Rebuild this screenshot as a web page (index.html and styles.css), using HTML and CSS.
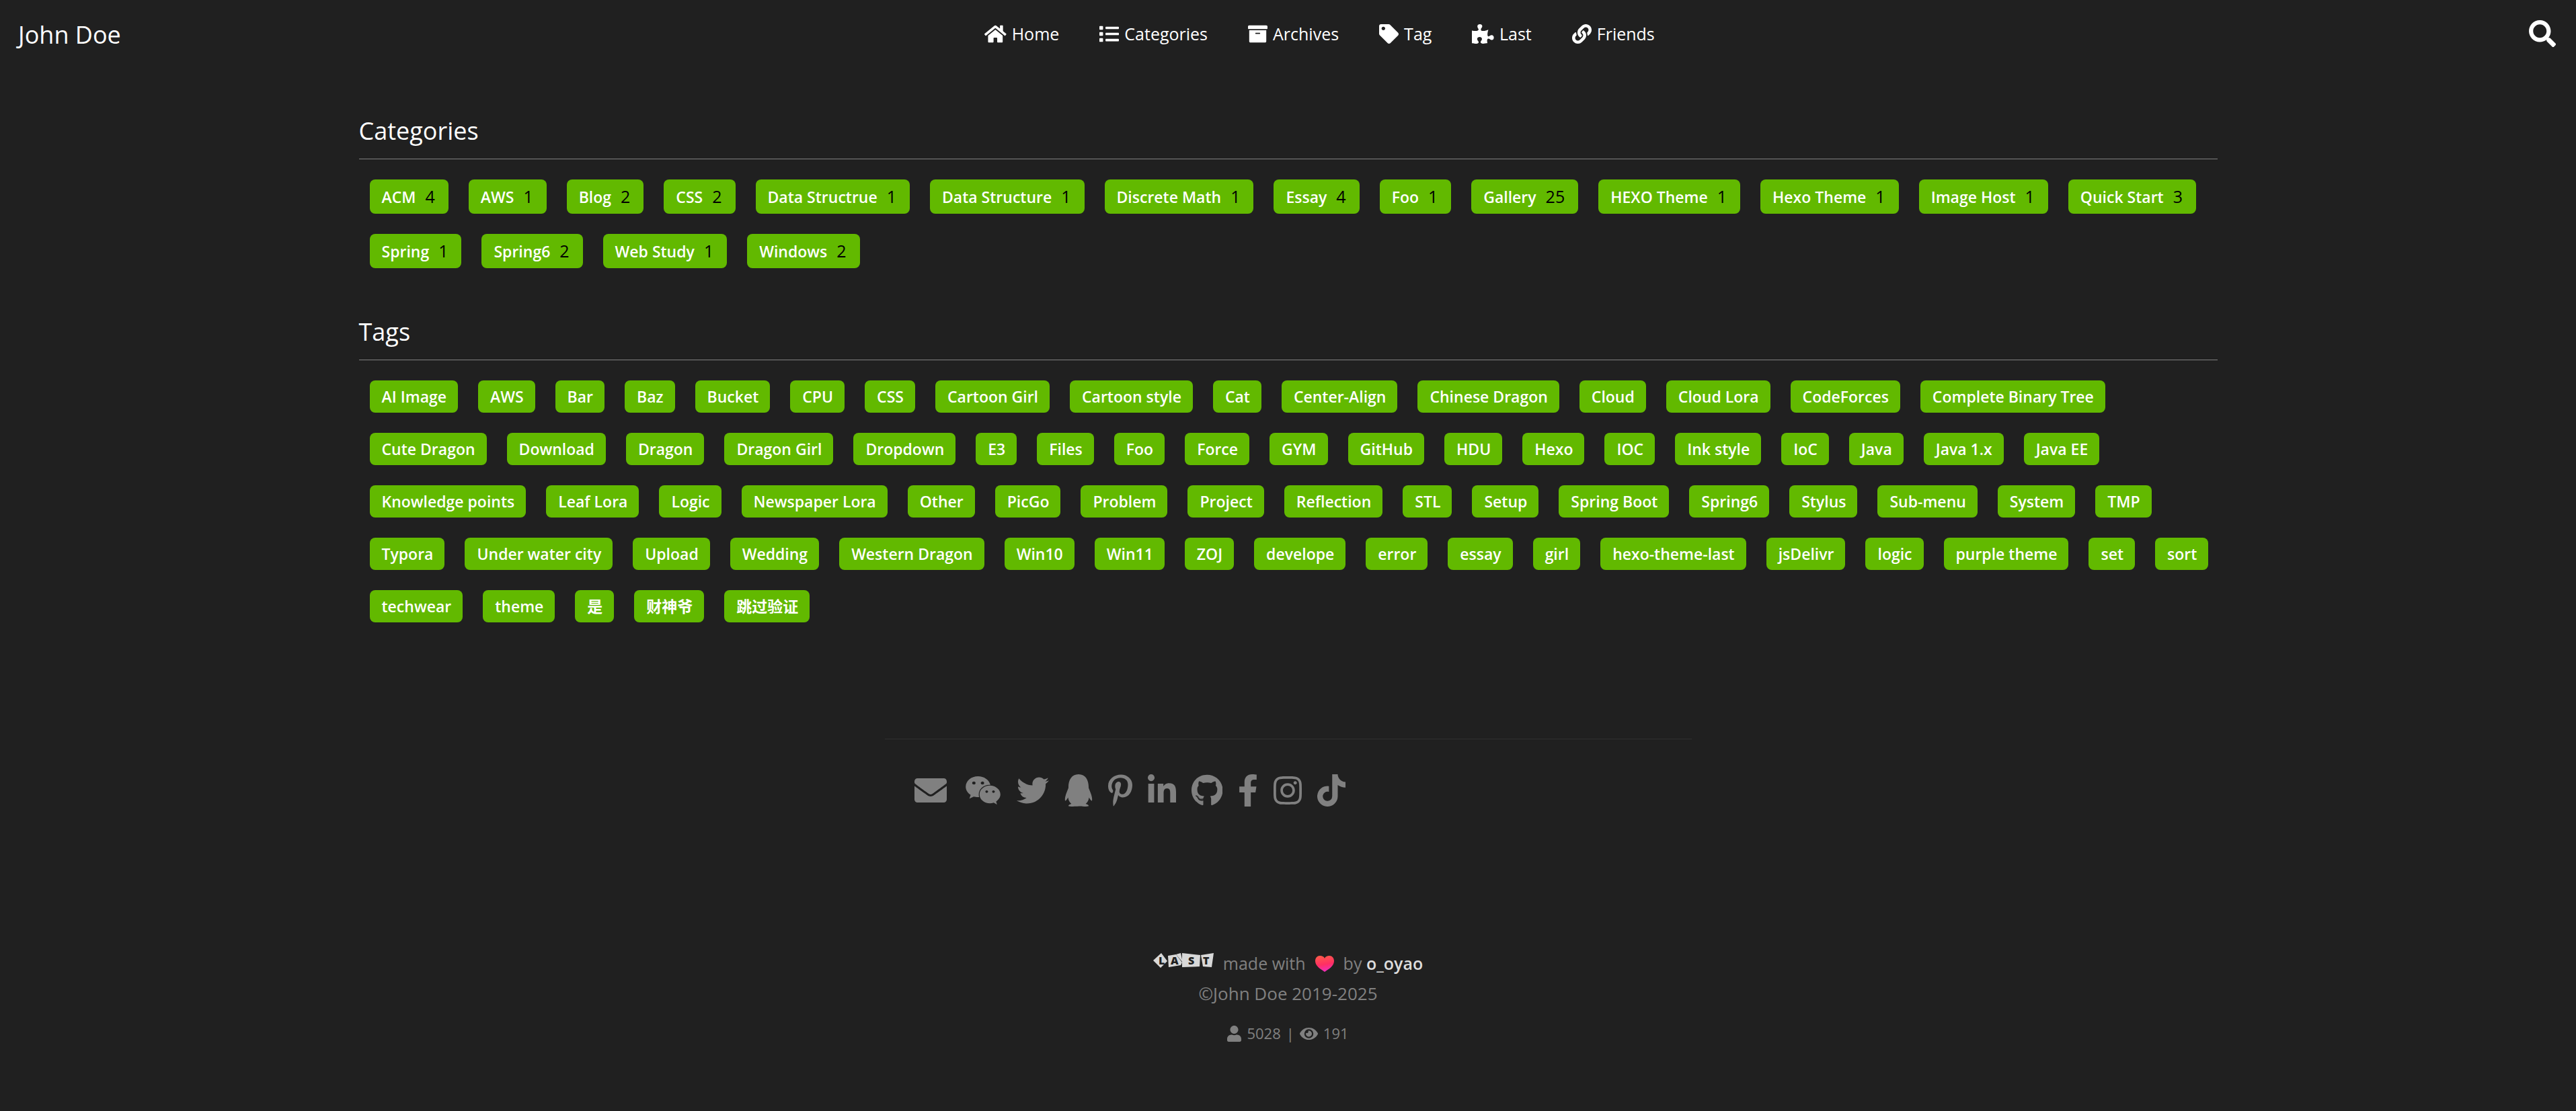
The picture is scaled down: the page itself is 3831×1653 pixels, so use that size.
FILE: index.html
```html
<!DOCTYPE html>
<html lang="en">
<head>
<meta charset="utf-8">
<meta name="viewport" content="width=device-width, initial-scale=1">
<title>Categories &amp; Tags - John Doe</title>
<link rel="stylesheet" href="styles.css">
</head>
<body>
<header class="topbar">
  <a class="brand" href="#">John Doe</a>
  <nav class="menu" aria-label="Main">
    <a class="menu-item" href="#"><svg class="icon" viewBox="0 0 576 512" aria-hidden="true"><path d="M280.37 148.26L96 300.11V464a16 16 0 0 0 16 16l112.06-.29a16 16 0 0 0 15.92-16V368a16 16 0 0 1 16-16h64a16 16 0 0 1 16 16v95.64a16 16 0 0 0 16 16.05L464 480a16 16 0 0 0 16-16V300L295.67 148.26a12.19 12.19 0 0 0-15.3 0zM571.6 251.47L488 182.56V44.05a12 12 0 0 0-12-12h-56a12 12 0 0 0-12 12v72.61L318.47 43a48 48 0 0 0-61 0L4.34 251.47a12 12 0 0 0-1.6 16.9l25.5 31A12 12 0 0 0 45.15 301l235.22-193.74a12.19 12.19 0 0 1 15.3 0L530.9 301a12 12 0 0 0 16.9-1.6l25.5-31a12 12 0 0 0-1.7-16.93z"/></svg>Home</a>
    <a class="menu-item" href="#"><svg class="icon" viewBox="0 0 512 512" aria-hidden="true"><path d="M80 368H16a16 16 0 0 0-16 16v64a16 16 0 0 0 16 16h64a16 16 0 0 0 16-16v-64a16 16 0 0 0-16-16zm0-320H16A16 16 0 0 0 0 64v64a16 16 0 0 0 16 16h64a16 16 0 0 0 16-16V64a16 16 0 0 0-16-16zm0 160H16a16 16 0 0 0-16 16v64a16 16 0 0 0 16 16h64a16 16 0 0 0 16-16v-64a16 16 0 0 0-16-16zm416 176H176a16 16 0 0 0-16 16v32a16 16 0 0 0 16 16h320a16 16 0 0 0 16-16v-32a16 16 0 0 0-16-16zm0-320H176a16 16 0 0 0-16 16v32a16 16 0 0 0 16 16h320a16 16 0 0 0 16-16V80a16 16 0 0 0-16-16zm0 160H176a16 16 0 0 0-16 16v32a16 16 0 0 0 16 16h320a16 16 0 0 0 16-16v-32a16 16 0 0 0-16-16z"/></svg>Categories</a>
    <a class="menu-item" href="#"><svg class="icon" viewBox="0 0 512 512" aria-hidden="true"><path d="M32 448c0 17.7 14.3 32 32 32h384c17.7 0 32-14.3 32-32V160H32v288zm160-212c0-6.600 5.400-12 12-12h104c6.600 0 12 5.400 12 12v8c0 6.600-5.400 12-12 12H204c-6.600 0-12-5.400-12-12v-8zM480 32H32C14.300 32 0 46.300 0 64v48c0 8.800 7.200 16 16 16h480c8.800 0 16-7.200 16-16V64c0-17.700-14.300-32-32-32z"/></svg>Archives</a>
    <a class="menu-item" href="#"><svg class="icon" viewBox="0 0 512 512" aria-hidden="true"><path d="M0 252.118V48C0 21.490 21.490 0 48 0h204.118a48 48 0 0 1 33.941 14.059l211.882 211.882c18.745 18.745 18.745 49.137 0 67.882L293.823 497.941c-18.745 18.745-49.137 18.745-67.882 0L14.059 286.059A48 48 0 0 1 0 252.118zM112 64c-26.510 0-48 21.490-48 48s21.490 48 48 48 48-21.490 48-48-21.490-48-48-48z"/></svg>Tag</a>
    <a class="menu-item" href="#"><svg class="icon" viewBox="0 0 576 512" aria-hidden="true"><path d="M519.442 288.651c-41.519 0-59.5 31.593-82.058 31.593C377.409 320.244 432 144 432 144s-196.288 80-196.288-3.297c0-35.827 36.288-46.25 36.288-85.985C272 19.216 243.885 0 210.539 0c-34.654 0-66.366 18.891-66.366 56.346 0 41.364 31.711 59.277 31.711 81.75C175.885 207.719 0 166.758 0 166.758v333.237s178.635 41.047 178.635-28.662c0-22.473-40-40.107-40-81.471 0-37.456 29.25-56.346 63.577-56.346 33.673 0 61.788 19.216 61.788 54.717 0 39.735-36.288 50.158-36.288 85.985 0 60.803 129.675 25.730 181.230 25.730 0 0-34.725-120.101 25.827-120.101 35.962 0 46.423 36.152 86.308 36.152C556.712 416 576 387.990 576 354.443c0-34.199-18.962-65.792-56.558-65.792z"/></svg>Last</a>
    <a class="menu-item" href="#"><svg class="icon" viewBox="0 0 512 512" aria-hidden="true"><path d="M326.612 185.391c59.747 59.809 58.927 155.698.36 214.590-.110.120-.240.250-.360.370l-67.200 67.200c-59.270 59.270-155.699 59.262-214.960 0-59.270-59.260-59.270-155.700 0-214.960l37.106-37.106c9.840-9.840 26.786-3.300 27.294 10.606.648 17.722 3.826 35.527 9.690 52.721 1.986 5.822.567 12.262-3.783 16.612l-13.087 13.087c-28.026 28.026-28.905 73.660-1.155 101.960 28.024 28.579 74.086 28.749 102.325.510l67.200-67.190c28.191-28.191 28.073-73.757 0-101.830-3.701-3.694-7.429-6.564-10.341-8.569a16.037 16.037 0 0 1-6.947-12.606c-.396-10.567 3.348-21.456 11.698-29.806l21.054-21.055c5.521-5.521 14.182-6.199 20.584-1.731a152.482 152.482 0 0 1 20.522 17.197zM467.547 44.449c-59.261-59.262-155.690-59.270-214.960 0l-67.200 67.200c-.120.120-.250.250-.360.370-58.566 58.892-59.387 154.781.360 214.590a152.454 152.454 0 0 0 20.521 17.196c6.402 4.468 15.064 3.789 20.584-1.731l21.054-21.055c8.350-8.350 12.094-19.239 11.698-29.806a16.037 16.037 0 0 0-6.947-12.606c-2.912-2.005-6.640-4.875-10.341-8.569-28.073-28.073-28.191-73.639 0-101.830l67.200-67.190c28.239-28.239 74.300-28.069 102.325.510 27.750 28.300 26.872 73.934-1.155 101.960l-13.087 13.087c-4.350 4.350-5.769 10.790-3.783 16.612 5.864 17.194 9.042 34.999 9.690 52.721.509 13.906 17.454 20.446 27.294 10.606l37.106-37.106c59.271-59.259 59.271-155.699.001-214.959z"/></svg>Friends</a>
  </nav>
  <button class="search" type="button" aria-label="Search"><svg class="search-icon" viewBox="0 0 512 512" aria-hidden="true"><path d="M505 442.700L405.300 343c-4.500-4.500-10.600-7-17-7H372c27.600-35.300 44-79.700 44-128C416 93.100 322.900 0 208 0S0 93.100 0 208s93.100 208 208 208c48.300 0 92.700-16.400 128-44v16.300c0 6.400 2.500 12.500 7 17l99.700 99.700c9.400 9.400 24.600 9.400 33.900 0l28.300-28.300c9.400-9.400 9.400-24.600.1-34zM208 336c-70.700 0-128-57.200-128-128 0-70.700 57.200-128 128-128 70.700 0 128 57.200 128 128 0 70.700-57.200 128-128 128z"/></svg></button>
</header>

<main class="content">
  <section class="group">
    <h2 class="group-title">Categories</h2>
    <ul class="chips">
      <li><a class="chip chip-counted" href="#">ACM<span class="count">4</span></a></li>
      <li><a class="chip chip-counted" href="#">AWS<span class="count">1</span></a></li>
      <li><a class="chip chip-counted" href="#">Blog<span class="count">2</span></a></li>
      <li><a class="chip chip-counted" href="#">CSS<span class="count">2</span></a></li>
      <li><a class="chip chip-counted" href="#">Data Structrue<span class="count">1</span></a></li>
      <li><a class="chip chip-counted" href="#">Data Structure<span class="count">1</span></a></li>
      <li><a class="chip chip-counted" href="#">Discrete Math<span class="count">1</span></a></li>
      <li><a class="chip chip-counted" href="#">Essay<span class="count">4</span></a></li>
      <li><a class="chip chip-counted" href="#">Foo<span class="count">1</span></a></li>
      <li><a class="chip chip-counted" href="#">Gallery<span class="count">25</span></a></li>
      <li><a class="chip chip-counted" href="#">HEXO Theme<span class="count">1</span></a></li>
      <li><a class="chip chip-counted" href="#">Hexo Theme<span class="count">1</span></a></li>
      <li><a class="chip chip-counted" href="#">Image Host<span class="count">1</span></a></li>
      <li><a class="chip chip-counted" href="#">Quick Start<span class="count">3</span></a></li>
      <li><a class="chip chip-counted" href="#">Spring<span class="count">1</span></a></li>
      <li><a class="chip chip-counted" href="#">Spring6<span class="count">2</span></a></li>
      <li><a class="chip chip-counted" href="#">Web Study<span class="count">1</span></a></li>
      <li><a class="chip chip-counted" href="#">Windows<span class="count">2</span></a></li>
    </ul>
  </section>

  <section class="group">
    <h2 class="group-title">Tags</h2>
    <ul class="chips">
      <li><a class="chip" href="#">AI Image</a></li>
      <li><a class="chip" href="#">AWS</a></li>
      <li><a class="chip" href="#">Bar</a></li>
      <li><a class="chip" href="#">Baz</a></li>
      <li><a class="chip" href="#">Bucket</a></li>
      <li><a class="chip" href="#">CPU</a></li>
      <li><a class="chip" href="#">CSS</a></li>
      <li><a class="chip" href="#">Cartoon Girl</a></li>
      <li><a class="chip" href="#">Cartoon style</a></li>
      <li><a class="chip" href="#">Cat</a></li>
      <li><a class="chip" href="#">Center-Align</a></li>
      <li><a class="chip" href="#">Chinese Dragon</a></li>
      <li><a class="chip" href="#">Cloud</a></li>
      <li><a class="chip" href="#">Cloud Lora</a></li>
      <li><a class="chip" href="#">CodeForces</a></li>
      <li><a class="chip" href="#">Complete Binary Tree</a></li>
      <li><a class="chip" href="#">Cute Dragon</a></li>
      <li><a class="chip" href="#">Download</a></li>
      <li><a class="chip" href="#">Dragon</a></li>
      <li><a class="chip" href="#">Dragon Girl</a></li>
      <li><a class="chip" href="#">Dropdown</a></li>
      <li><a class="chip" href="#">E3</a></li>
      <li><a class="chip" href="#">Files</a></li>
      <li><a class="chip" href="#">Foo</a></li>
      <li><a class="chip" href="#">Force</a></li>
      <li><a class="chip" href="#">GYM</a></li>
      <li><a class="chip" href="#">GitHub</a></li>
      <li><a class="chip" href="#">HDU</a></li>
      <li><a class="chip" href="#">Hexo</a></li>
      <li><a class="chip" href="#">IOC</a></li>
      <li><a class="chip" href="#">Ink style</a></li>
      <li><a class="chip" href="#">IoC</a></li>
      <li><a class="chip" href="#">Java</a></li>
      <li><a class="chip" href="#">Java 1.x</a></li>
      <li><a class="chip" href="#">Java EE</a></li>
      <li><a class="chip" href="#">Knowledge points</a></li>
      <li><a class="chip" href="#">Leaf Lora</a></li>
      <li><a class="chip" href="#">Logic</a></li>
      <li><a class="chip" href="#">Newspaper Lora</a></li>
      <li><a class="chip" href="#">Other</a></li>
      <li><a class="chip" href="#">PicGo</a></li>
      <li><a class="chip" href="#">Problem</a></li>
      <li><a class="chip" href="#">Project</a></li>
      <li><a class="chip" href="#">Reflection</a></li>
      <li><a class="chip" href="#">STL</a></li>
      <li><a class="chip" href="#">Setup</a></li>
      <li><a class="chip" href="#">Spring Boot</a></li>
      <li><a class="chip" href="#">Spring6</a></li>
      <li><a class="chip" href="#">Stylus</a></li>
      <li><a class="chip" href="#">Sub-menu</a></li>
      <li><a class="chip" href="#">System</a></li>
      <li><a class="chip" href="#">TMP</a></li>
      <li><a class="chip" href="#">Typora</a></li>
      <li><a class="chip" href="#">Under water city</a></li>
      <li><a class="chip" href="#">Upload</a></li>
      <li><a class="chip" href="#">Wedding</a></li>
      <li><a class="chip" href="#">Western Dragon</a></li>
      <li><a class="chip" href="#">Win10</a></li>
      <li><a class="chip" href="#">Win11</a></li>
      <li><a class="chip" href="#">ZOJ</a></li>
      <li><a class="chip" href="#">develope</a></li>
      <li><a class="chip" href="#">error</a></li>
      <li><a class="chip" href="#">essay</a></li>
      <li><a class="chip" href="#">girl</a></li>
      <li><a class="chip" href="#">hexo-theme-last</a></li>
      <li><a class="chip" href="#">jsDelivr</a></li>
      <li><a class="chip" href="#">logic</a></li>
      <li><a class="chip" href="#">purple theme</a></li>
      <li><a class="chip" href="#">set</a></li>
      <li><a class="chip" href="#">sort</a></li>
      <li><a class="chip" href="#">techwear</a></li>
      <li><a class="chip" href="#">theme</a></li>
      <li><a class="chip" href="#" lang="zh">是</a></li>
      <li><a class="chip" href="#" lang="zh">财神爷</a></li>
      <li><a class="chip" href="#" lang="zh">跳过验证</a></li>
    </ul>
  </section>
</main>

<footer class="footer">
  <div class="social">
    <a class="social-link social-mail" href="#" aria-label="Email"><svg class="social-icon" viewBox="0 0 512 512"><path d="M502.300 190.800c3.900-3.100 9.700-.2 9.700 4.700V400c0 26.500-21.500 48-48 48H48c-26.500 0-48-21.500-48-48V195.600c0-5 5.700-7.800 9.700-4.700 22.400 17.400 52.100 39.500 154.100 113.600 21.100 15.400 56.700 47.800 92.200 47.600 35.700.3 72-32.800 92.300-47.600 102-74.100 131.600-96.300 154-113.700zM256 320c23.200.4 56.600-29.200 73.400-41.400 132.700-96.300 142.800-104.700 173.400-128.700 5.800-4.500 9.200-11.500 9.200-18.900v-19c0-26.500-21.500-48-48-48H48c-26.500 0-48 21.500-48 48v19c0 7.400 3.400 14.300 9.200 18.900 30.600 23.900 40.700 32.400 173.400 128.700 16.800 12.200 50.200 41.800 73.400 41.400z"/></svg></a>
    <a class="social-link" href="#" aria-label="WeChat"><svg class="social-icon" viewBox="0 0 576 512"><path d="M385.200 167.600c6.400 0 12.600.3 18.800 1.100C387.400 90.300 303.300 32 207.700 32 100.500 32 13 104.800 13 197.400c0 53.400 29.300 97.500 77.900 131.600l-19.300 58.600 68-34.100c24.400 4.800 43.800 9.700 68.200 9.700 6.200 0 12.100-.3 18.300-.8-4-12.900-6.200-26.600-6.200-40.800-.1-84.900 72.900-154 165.300-154zm-104.500-52.900c14.500 0 24.200 9.700 24.200 24.400 0 14.500-9.700 24.200-24.200 24.200-14.800 0-29.300-9.700-29.300-24.200.1-14.700 14.600-24.400 29.300-24.400zm-136.400 48.600c-14.500 0-29.300-9.700-29.300-24.200 0-14.800 14.800-24.400 29.300-24.400 14.800 0 24.400 9.700 24.400 24.400 0 14.600-9.600 24.200-24.400 24.200zM563 319.400c0-77.900-77.900-141.300-165.400-141.300-92.700 0-165.400 63.400-165.400 141.300S305 460.700 397.600 460.700c19.300 0 38.900-5.100 58.600-9.900l53.400 29.300-14.800-48.600C534 402.100 563 363.200 563 319.400zm-219.100-24.500c-9.700 0-19.300-9.700-19.300-19.600 0-9.700 9.700-19.300 19.300-19.300 14.800 0 24.400 9.700 24.400 19.300 0 10-9.700 19.600-24.400 19.600zm107.100 0c-9.700 0-19.300-9.700-19.300-19.600 0-9.700 9.700-19.300 19.300-19.300 14.500 0 24.400 9.700 24.400 19.300.1 10-9.900 19.600-24.400 19.600z"/></svg></a>
    <a class="social-link" href="#" aria-label="Twitter"><svg class="social-icon" viewBox="0 0 512 512"><path d="M459.370 151.716c.325 4.548.325 9.097.325 13.645 0 138.720-105.583 298.558-298.558 298.558-59.452 0-114.680-17.219-161.137-47.106 8.447.974 16.568 1.299 25.340 1.299 49.055 0 94.213-16.568 130.274-44.832-46.132-.975-84.792-31.188-98.112-72.772 6.498.974 12.995 1.624 19.818 1.624 9.421 0 18.843-1.300 27.614-3.573-48.081-9.747-84.143-51.980-84.143-102.985v-1.299c13.969 7.797 30.214 12.670 47.431 13.319-28.264-18.843-46.781-51.005-46.781-87.391 0-19.492 5.197-37.360 14.294-52.954 51.655 63.675 129.300 105.258 216.365 109.807-1.624-7.797-2.599-15.918-2.599-24.040 0-57.828 46.782-104.934 104.934-104.934 30.213 0 57.502 12.670 76.670 33.137 23.715-4.548 46.456-13.320 66.599-25.340-7.798 24.366-24.366 44.833-46.132 57.827 21.117-2.273 41.584-8.122 60.426-16.243-14.292 20.791-32.161 39.308-52.628 54.253z"/></svg></a>
    <a class="social-link" href="#" aria-label="QQ"><svg class="social-icon" viewBox="0 0 448 512"><path d="M433.754 420.445c-11.526 1.393-44.860-52.741-44.860-52.741 0 31.345-16.136 72.247-51.051 101.786 16.842 5.192 54.843 19.167 45.803 34.421-7.316 12.343-125.510 7.881-159.632 4.037-34.122 3.844-152.316 8.306-159.632-4.037-9.045-15.250 28.918-29.214 45.783-34.415-34.920-29.539-51.059-70.445-51.059-101.792 0 0-33.334 54.134-44.859 52.741-5.370-.650-12.424-29.644 9.347-99.704 10.261-33.024 21.995-60.478 40.144-105.779C60.683 98.063 108.982.006 224 0c113.737.006 163.156 96.133 160.264 214.963 18.118 45.223 29.912 72.850 40.144 105.778 21.768 70.060 14.716 99.053 9.346 99.704z"/></svg></a>
    <a class="social-link" href="#" aria-label="Pinterest"><svg class="social-icon" viewBox="0 0 384 512"><path d="M204 6.500C101.400 6.500 0 74.900 0 185.600 0 256 39.600 296 63.600 296c9.900 0 15.600-27.600 15.600-35.400 0-9.300-23.700-29.100-23.700-67.800 0-80.400 61.200-137.400 140.400-137.400 68.100 0 118.500 38.700 118.500 109.800 0 53.100-21.300 152.700-90.300 152.700-24.900 0-46.200-18-46.200-43.800 0-37.800 26.400-74.400 26.400-113.400 0-66.200-93.900-54.200-93.900 25.800 0 16.800 2.100 35.400 9.600 50.700-13.800 59.400-42 147.900-42 209.100 0 18.900 2.700 37.500 4.500 56.400 3.400 3.800 1.700 3.400 6.900 1.500 50.400-69 48.600-82.500 71.400-172.800 12.300 23.400 44.100 36 69.300 36 106.200 0 153.900-103.500 153.900-196.800C384 71.300 298.200 6.500 204 6.500z"/></svg></a>
    <a class="social-link" href="#" aria-label="LinkedIn"><svg class="social-icon" viewBox="0 0 448 512"><path d="M100.280 448H7.400V148.900h92.880zM53.790 108.100C24.090 108.100 0 83.500 0 53.800a53.790 53.790 0 0 1 107.580 0c0 29.700-24.100 54.300-53.790 54.300zM447.900 448h-92.680V302.400c0-34.700-.7-79.200-48.290-79.200-48.290 0-55.690 37.700-55.690 76.700V448h-92.780V148.900h89.080v40.800h1.300c12.400-23.500 42.690-48.300 87.880-48.300 94 0 111.280 61.900 111.280 142.300V448z"/></svg></a>
    <a class="social-link" href="#" aria-label="GitHub"><svg class="social-icon" viewBox="0 0 496 512"><path d="M165.900 397.400c0 2-2.300 3.600-5.200 3.600-3.300.3-5.600-1.300-5.600-3.600 0-2 2.300-3.600 5.200-3.600 3-.3 5.600 1.300 5.600 3.600zm-31.100-4.500c-.7 2 1.300 4.300 4.300 4.900 2.600 1 5.600 0 6.200-2s-1.300-4.300-4.300-5.200c-2.600-.7-5.500.3-6.200 2.300zm44.200-1.700c-2.900.7-4.900 2.600-4.600 4.900.3 2 2.900 3.300 5.900 2.600 2.900-.7 4.900-2.600 4.600-4.600-.3-1.900-3-3.200-5.900-2.900zM244.800 8C106.100 8 0 113.300 0 252c0 110.900 69.800 205.800 169.500 239.200 12.800 2.300 17.300-5.600 17.300-12.100 0-6.200-.3-40.400-.3-61.400 0 0-70 15-84.700-29.800 0 0-11.400-29.100-27.800-36.600 0 0-22.900-15.700 1.600-15.400 0 0 24.900 2 38.600 25.800 21.900 38.600 58.600 27.500 72.900 20.900 2.300-16 8.800-27.100 16-33.700-55.900-6.200-112.300-14.300-112.300-110.500 0-27.500 7.600-41.300 23.600-58.900-2.600-6.500-11.100-33.300 2.600-67.900 20.900-6.500 69 27 69 27 20-5.600 41.500-8.500 62.800-8.500s42.800 2.900 62.800 8.500c0 0 48.100-33.600 69-27 13.700 34.700 5.200 61.400 2.600 67.900 16 17.700 25.800 31.500 25.800 58.900 0 96.500-58.900 104.200-114.800 110.500 9.200 7.900 17 22.900 17 46.400 0 33.700-.3 75.400-.3 83.600 0 6.500 4.600 14.400 17.300 12.100C428.200 457.800 496 362.900 496 252 496 113.300 383.500 8 244.800 8zM97.200 352.900c-1.300 1-1 3.300.7 5.200 1.600 1.600 3.900 2.300 5.200 1 1.300-1 1-3.300-.7-5.200-1.600-1.600-3.900-2.300-5.200-1zm-10.800-8.100c-.7 1.300.3 2.900 2.300 3.900 1.600 1 3.600.7 4.300-.7.7-1.300-.3-2.900-2.300-3.900-2-.6-3.600-.3-4.300.7zm32.400 35.600c-1.600 1.300-1 4.300 1.300 6.200 2.300 2.300 5.200 2.600 6.500 1 1.300-1.300.7-4.300-1.300-6.200-2.200-2.300-5.200-2.600-6.500-1zm-11.400-14.700c-1.600 1-1.600 3.600 0 5.900 1.600 2.300 4.300 3.300 5.600 2.300 1.600-1.300 1.600-3.900 0-6.200-1.400-2.300-4-3.300-5.600-2z"/></svg></a>
    <a class="social-link" href="#" aria-label="Facebook"><svg class="social-icon" viewBox="0 0 320 512"><path d="M279.140 288l14.220-92.660h-88.910v-60.130c0-25.350 12.420-50.060 52.240-50.060h40.420V6.260S260.430 0 225.360 0c-73.220 0-121.080 44.380-121.080 124.720v70.620H22.890V288h81.390v224h100.170V288z"/></svg></a>
    <a class="social-link" href="#" aria-label="Instagram"><svg class="social-icon" viewBox="0 0 448 512"><path d="M224.100 141c-63.600 0-114.900 51.300-114.900 114.900s51.300 114.900 114.900 114.900S339 319.500 339 255.900 287.700 141 224.100 141zm0 189.600c-41.100 0-74.700-33.500-74.700-74.700s33.500-74.700 74.700-74.700 74.700 33.500 74.700 74.700-33.600 74.700-74.700 74.700zm146.400-194.300c0 14.900-12 26.800-26.800 26.800-14.900 0-26.800-12-26.800-26.800s12-26.800 26.800-26.800 26.800 12 26.800 26.800zm76.100 27.200c-1.700-35.900-9.900-67.700-36.200-93.900-26.200-26.200-58-34.400-93.900-36.200-37-2.100-147.900-2.100-184.900 0-35.800 1.700-67.600 9.900-93.900 36.100s-34.400 58-36.200 93.900c-2.100 37-2.100 147.900 0 184.900 1.700 35.900 9.900 67.700 36.200 93.900s58 34.400 93.900 36.200c37 2.100 147.900 2.100 184.900 0 35.900-1.700 67.700-9.900 93.900-36.200 26.200-26.200 34.400-58 36.200-93.900 2.100-37 2.100-147.800 0-184.800zM398.800 388c-7.800 19.600-22.900 34.700-42.600 42.600-29.500 11.700-99.500 9-132.100 9s-102.700 2.600-132.100-9c-19.600-7.800-34.700-22.900-42.600-42.600-11.700-29.500-9-99.500-9-132.100s-2.600-102.700 9-132.100c7.800-19.600 22.900-34.700 42.600-42.600 29.500-11.700 99.500-9 132.100-9s102.700-2.600 132.100 9c19.600 7.800 34.700 22.900 42.600 42.600 11.700 29.500 9 99.500 9 132.100s2.700 102.700-9 132.100z"/></svg></a>
    <a class="social-link" href="#" aria-label="TikTok"><svg class="social-icon" viewBox="0 0 448 512"><path d="M448 209.910a210.060 210.060 0 0 1-122.770-39.250V349.380A162.550 162.550 0 1 1 185 188.310V278.200a74.620 74.620 0 1 0 52.230 71.180V0h88a121.180 121.180 0 0 0 1.860 22.170A122.180 122.180 0 0 0 381 102.390a121.430 121.430 0 0 0 67 20.140z"/></svg></a>
  </div>

  <div class="credits">
    <p class="credit-line">
      <a class="theme-link" href="#" aria-label="LAST theme"><svg class="theme-logo" viewBox="0 0 90 22" aria-hidden="true">
        <g class="logo-tile">
          <path d="M0 11L12 0 21 12 11 22z"/>
          <path d="M22 4L34 2 43 14 41 18 23 21z"/>
          <path d="M34 2L41 0 44 14z"/>
          <path d="M43 0L70 3 69 20 43 21z"/>
          <path d="M71 3L90 0 87 21 74 20z"/>
        </g>
        <g class="logo-letter">
          <text x="8" y="17">L</text>
          <text x="26" y="17">A</text>
          <text x="52" y="17">S</text>
          <text x="74" y="17">T</text>
        </g>
      </svg></a>
      <span>made with</span>
      <svg class="heart" viewBox="0 0 28 24" role="img" aria-label="love">
        <defs><linearGradient id="heart-fill" x1="0.3" y1="0" x2="0.5" y2="1"><stop offset="0" stop-color="#ff5a4a"/><stop offset="0.55" stop-color="#ff2f63"/><stop offset="1" stop-color="#f02ec0"/></linearGradient></defs>
        <path fill="url(#heart-fill)" d="M14 24C10 21 0 16 0 8 0 3 3 0 7 0c3 0 6 1 7 4 1-3 4-4 7-4 4 0 7 3 7 8 0 8-10 13-14 16z"/>
      </svg>
      <span>by <a class="author" href="#">o_oyao</a></span>
    </p>
    <p class="copyright">©John Doe 2019-2025</p>
    <p class="stats">
      <svg class="stat-icon" viewBox="0 0 448 512" role="img" aria-label="Visitors"><path d="M224 256c70.700 0 128-57.300 128-128S294.700 0 224 0 96 57.300 96 128s57.300 128 128 128zm89.600 32h-16.700c-22.200 10.200-46.900 16-72.900 16s-50.600-5.800-72.900-16h-16.700C60.200 288 0 348.200 0 422.400V464c0 26.500 21.500 48 48 48h352c26.500 0 48-21.500 48-48v-41.600c0-74.200-60.200-134.400-134.400-134.400z"/></svg>
      <span>5028</span><span>|</span>
      <svg class="stat-icon" viewBox="0 0 576 512" role="img" aria-label="Views"><path d="M572.520 241.400C518.290 135.590 410.930 64 288 64S57.680 135.640 3.480 241.410a32.350 32.350 0 0 0 0 29.190C57.710 376.410 165.070 448 288 448s230.320-71.640 284.520-177.410a32.350 32.350 0 0 0 0-29.190zM288 400a144 144 0 1 1 144-144 143.930 143.930 0 0 1-144 144zm0-240a95.310 95.310 0 0 0-25.310 3.790 47.850 47.850 0 0 1-66.900 66.900A95.780 95.780 0 1 0 288 160z"/></svg>
      <span>191</span>
    </p>
  </div>
</footer>
</body>
</html>
```
FILE: styles.css
```css
* {
  box-sizing: border-box;
}

body {
  margin: 0;
  background: #202020;
  color: #fff;
  font: 25px/45px "Open Sans", "Noto Sans CJK SC", sans-serif;
}

a {
  color: inherit;
  text-decoration: none;
}

svg {
  display: block;
  fill: currentColor;
}

/* Top bar */
.topbar {
  display: flex;
  align-items: center;
  justify-content: space-between;
  min-height: 100px;
  padding: 0 30px 0 27px;
}

.brand {
  padding-top: 3px;
  font-size: 36px;
  line-height: 54px;
}

.menu {
  display: flex;
  flex-wrap: wrap;
  gap: 0 60px;
}

.menu-item {
  display: flex;
  align-items: center;
  gap: 8px;
}

.icon {
  height: 29px;
}

.search {
  padding: 0 0 0 16px;
  border: 0;
  background: none;
  color: inherit;
  cursor: pointer;
}

.search-icon {
  height: 40px;
}

/* Category and tag lists */
.content {
  max-width: 2764px;
  margin: 0 auto;
}

.group {
  padding-top: 68px;
}

.group-title {
  margin: 0;
  padding-bottom: 14px;
  border-bottom: 1px solid #808080;
  font-size: 36px;
  font-weight: 400;
  line-height: 54px;
}

.chips {
  display: flex;
  flex-wrap: wrap;
  gap: 30px;
  margin: 0;
  padding: 30px 8px 0 16px;
  list-style: none;
}

.chip {
  display: block;
  padding: 0 17px 0 18px;
  border-radius: 8px;
  background: #62b900;
  font-size: 23px;
  font-weight: 600;
  line-height: 48px;
}

.chip-counted {
  padding-right: 20px;
  line-height: 50px;
}

.count {
  margin-left: 14px;
  color: #000;
  font-size: 25px;
  font-weight: 400;
}

/* Footer */
.footer {
  padding: 173px 0 94px;
  color: #808080;
}

.social {
  display: flex;
  flex-wrap: wrap;
  gap: 23px;
  max-width: 1200px;
  margin: 0 auto;
  padding: 52px 44px 0;
  border-top: 1px solid #303030;
}

.social-mail {
  margin-right: 4px;
}

.social-icon {
  height: 48px;
}

.credits {
  padding-top: 211px;
}

.credits p {
  display: flex;
  align-items: center;
  justify-content: center;
  margin: 0;
}

.credits .credit-line {
  gap: 14px;
}

.theme-link {
  padding-bottom: 10px;
}

.theme-logo {
  height: 22px;
  overflow: visible;
}

.logo-tile {
  fill: #d8d8d8;
}

.logo-letter {
  fill: #202020;
  font-size: 16px;
  font-weight: 800;
}

.heart {
  height: 24px;
}

.author {
  color: #ddd;
  font-weight: 600;
}

.credits .copyright {
  font-size: 26px;
}

.credits .stats {
  gap: 8px;
  padding-top: 14px;
  font-size: 22px;
}

.stat-icon {
  height: 24px;
}
```
